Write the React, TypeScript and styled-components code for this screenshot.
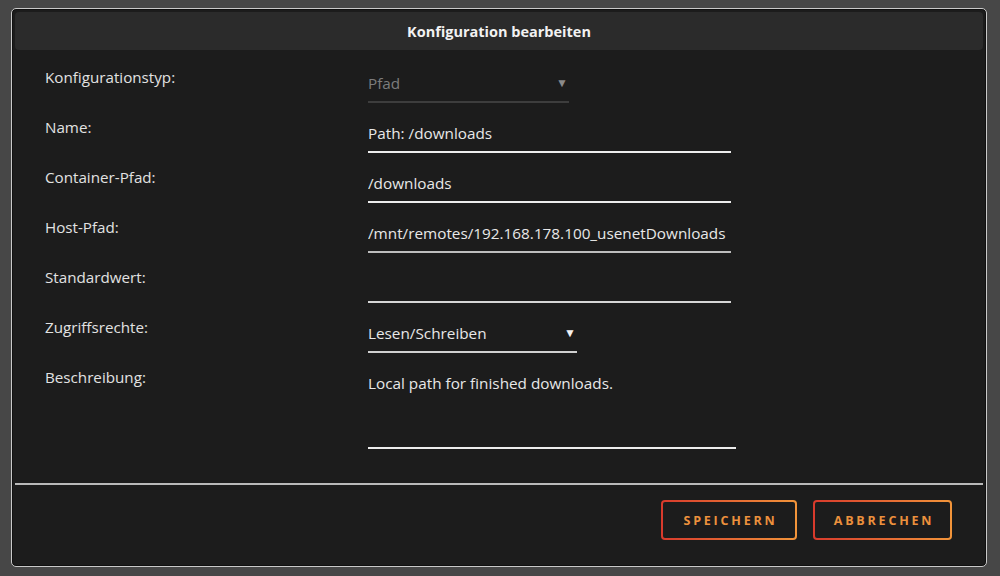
import React from "react";
import styled, { createGlobalStyle } from "styled-components";

const GlobalStyle = createGlobalStyle`
  html, body {
    margin: 0;
    padding: 0;
    background: #474747;
  }
  body {
    font-family: "Open Sans", "Noto Sans", "Liberation Sans", sans-serif;
    -webkit-font-smoothing: antialiased;
  }
  * { box-sizing: border-box; }
`;

const Page = styled.div`
  width: 1000px;
  height: 576px;
  padding: 8px 13px 9px 11px;
`;

const Dialog = styled.div`
  height: 559px;
  display: flex;
  flex-direction: column;
  background: #1c1c1c;
  border: 1px solid #c9c9c9;
  border-radius: 5px;
  box-shadow: inset 0 0 0 1px #101010;
  padding: 3px;
`;

const Header = styled.div`
  height: 38px;
  display: flex;
  align-items: center;
  justify-content: center;
  background: #2b2b2b;
  border-radius: 4px;
  color: #f2f2f2;
  font-weight: 700;
  font-size: 14.5px;
`;

const Form = styled.div`
  display: flex;
  flex-direction: column;
  padding: 3px 0 0 30px;
`;

const Row = styled.div`
  display: grid;
  grid-template-columns: 323px auto;
  align-items: start;
`;

const Label = styled.div`
  padding-top: 14px;
  line-height: 20px;
  font-size: 15.2px;
  color: #e2e2e2;
`;

const Field = styled.div<{ $width: number; $line: string; $height?: number }>`
  width: ${(p) => p.$width}px;
  height: ${(p) => p.$height ?? 50}px;
  padding-top: 20px;
  border-bottom: 2px solid ${(p) => p.$line};
  display: flex;
  align-items: flex-start;
  justify-content: space-between;
  overflow: hidden;
`;

const Value = styled.span<{ $muted?: boolean }>`
  line-height: 20px;
  font-size: 15.3px;
  color: ${(p) => (p.$muted ? "#7d7d7d" : "#e8e8e8")};
  white-space: nowrap;
`;

const Arrow = styled.span<{ $muted?: boolean }>`
  line-height: 20px;
  font-size: 12px;
  margin-right: 1px;
  color: ${(p) => (p.$muted ? "#8a8a8a" : "#f2f2f2")};
`;

const Divider = styled.div`
  margin-top: 34px;
  height: 2px;
  background: #b9b9b9;
`;

const Footer = styled.div`
  display: flex;
  justify-content: flex-end;
  gap: 16px;
  padding: 15px 31px 0 0;
`;

const Button = styled.button<{ $width: number }>`
  width: ${(p) => p.$width}px;
  height: 40px;
  border: 2px solid transparent;
  border-radius: 4px;
  background:
    linear-gradient(#1c1c1c, #1c1c1c) padding-box,
    linear-gradient(90deg, #d83a2c, #f2953a) border-box;
  color: #ec913d;
  font-family: "Open Sans", "Noto Sans", sans-serif;
  font-weight: 700;
  font-size: 12.5px;
  letter-spacing: 2.8px;
  padding: 0 0 0 3px;
  cursor: pointer;
`;

type Item = {
  label: string;
  value: string;
  width: number;
  line: string;
  muted?: boolean;
  select?: boolean;
  height?: number;
};

const items: Item[] = [
  { label: "Konfigurationstyp:", value: "Pfad", width: 201, line: "#3d3d3d", muted: true, select: true },
  { label: "Name:", value: "Path: /downloads", width: 363, line: "#ececec" },
  { label: "Container-Pfad:", value: "/downloads", width: 363, line: "#ececec" },
  { label: "Host-Pfad:", value: "/mnt/remotes/192.168.178.100_usenetDownloads", width: 363, line: "#bdbdbd" },
  { label: "Standardwert:", value: "", width: 363, line: "#d6d6d6" },
  { label: "Zugriffsrechte:", value: "Lesen/Schreiben", width: 209, line: "#d0d0d0", select: true },
  { label: "Beschreibung:", value: "Local path for finished downloads.", width: 368, line: "#ececec", height: 96 },
];

export default function App() {
  return (
    <>
      <GlobalStyle />
      <Page>
        <Dialog>
          <Header>Konfiguration bearbeiten</Header>
          <Form>
            {items.map((it) => (
              <Row key={it.label}>
                <Label>{it.label}</Label>
                <Field $width={it.width} $line={it.line} $height={it.height}>
                  <Value $muted={it.muted}>{it.value}</Value>
                  {it.select && <Arrow $muted={it.muted}>▼</Arrow>}
                </Field>
              </Row>
            ))}
          </Form>
          <Divider />
          <Footer>
            <Button $width={136}>SPEICHERN</Button>
            <Button $width={139}>ABBRECHEN</Button>
          </Footer>
        </Dialog>
      </Page>
    </>
  );
}
